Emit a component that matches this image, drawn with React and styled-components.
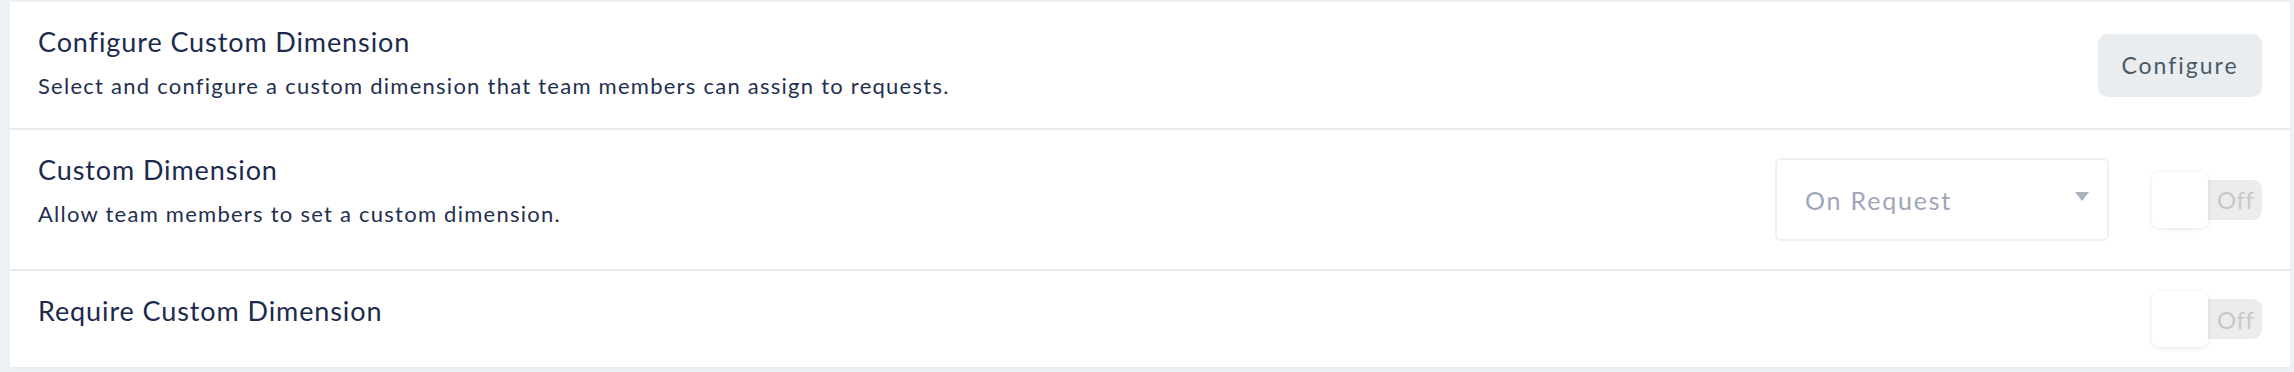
import React from "react";
import styled, { createGlobalStyle } from "styled-components";

const Global = createGlobalStyle`
  html, body {
    margin: 0;
    padding: 0;
    background: #eef1f4;
  }
  body {
    font-family: Lato, "Open Sans", sans-serif;
    -webkit-font-smoothing: antialiased;
  }
`;

const Page = styled.div`
  padding: 2px 4px 0 10px;
`;

const Card = styled.div`
  background: #fff;
`;

const Row = styled.div`
  display: flex;
  justify-content: space-between;
  align-items: center;
  padding: 28px;
  border-bottom: 2px solid #e8ecf0;
`;

const Text = styled.div`
  align-self: flex-start;
  margin-top: -4px;
`;

const Title = styled.div`
  font-size: 27px;
  line-height: 32px;
  letter-spacing: 0.9px;
  color: #1c2a4d;
`;

const Desc = styled.div`
  margin-top: 14px;
  font-size: 22px;
  line-height: 28px;
  letter-spacing: 1.25px;
  color: #22304f;
`;

const Controls = styled.div`
  display: flex;
  align-items: center;
  gap: 43px;
`;

const Button = styled.button`
  height: 63px;
  width: 164px;
  border: none;
  border-radius: 10px;
  background: #e9edf0;
  color: #4a5a65;
  font-family: Lato, "Open Sans", sans-serif;
  font-size: 23px;
  letter-spacing: 2px;
  cursor: pointer;
`;

const Select = styled.div`
  box-sizing: border-box;
  width: 334px;
  height: 83px;
  border: 2px solid #eef0f2;
  border-radius: 6px;
  display: flex;
  align-items: center;
  justify-content: space-between;
  padding: 0 18px 0 28px;
  color: #9ea6b8;
  font-size: 25px;
  letter-spacing: 1.8px;
`;

const Caret = styled.span`
  width: 0;
  height: 0;
  border-left: 7px solid transparent;
  border-right: 7px solid transparent;
  border-top: 9px solid #a9b0bf;
  margin-top: -6px;
`;

const Toggle = styled.div`
  display: flex;
  align-items: center;
  width: 110px;
  height: 40px;
  border-radius: 9px;
  background: #ececec;
`;

const Knob = styled.div`
  flex: none;
  width: 56px;
  height: 56px;
  margin: -8px 0;
  border-radius: 7px;
  background: #fff;
  box-shadow: 0 1px 5px rgba(0, 0, 0, 0.1);
`;

const ToggleLabel = styled.span`
  margin-left: 9px;
  font-size: 24px;
  letter-spacing: 0.5px;
  color: #c8c8c8;
`;

const Switch = ({ on }) => (
  <Toggle>
    <Knob />
    <ToggleLabel>{on ? "On" : "Off"}</ToggleLabel>
  </Toggle>
);

export default function App() {
  return (
    <Page>
      <Global />
      <Card>
        <Row>
          <Text>
            <Title>Configure Custom Dimension</Title>
            <Desc>Select and configure a custom dimension that team members can assign to requests.</Desc>
          </Text>
          <Button>Configure</Button>
        </Row>
        <Row>
          <Text>
            <Title>Custom Dimension</Title>
            <Desc>Allow team members to set a custom dimension.</Desc>
          </Text>
          <Controls>
            <Select>
              On Request
              <Caret />
            </Select>
            <Switch on={false} />
          </Controls>
        </Row>
        <Row>
          <Text>
            <Title>Require Custom Dimension</Title>
          </Text>
          <Switch on={false} />
        </Row>
      </Card>
    </Page>
  );
}
